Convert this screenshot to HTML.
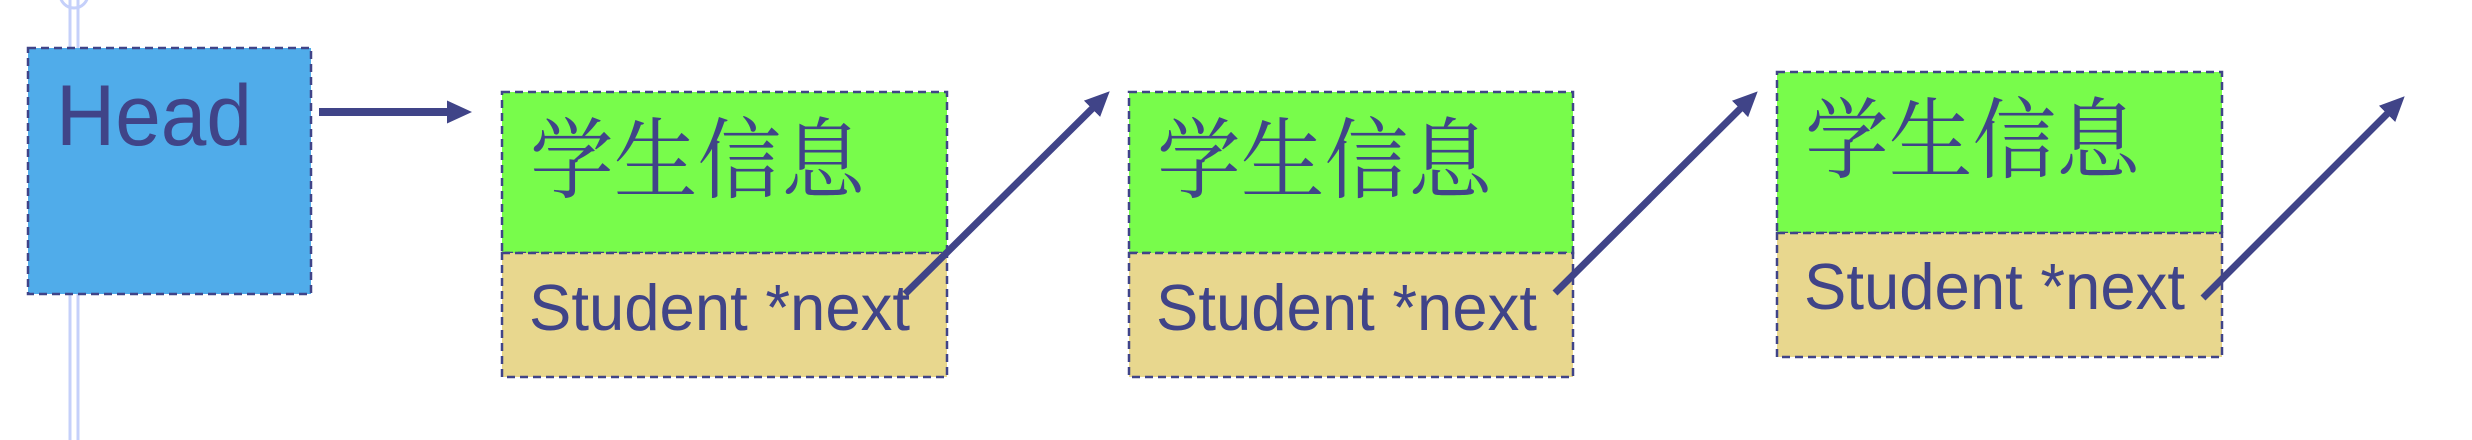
<!DOCTYPE html>
<html><head><meta charset="utf-8"><style>
html,body{margin:0;padding:0;background:#fff;width:2472px;height:440px;overflow:hidden}
</style></head><body>
<svg width="2472" height="440" viewBox="0 0 2472 440" xmlns="http://www.w3.org/2000/svg">
<defs>
<marker id="ah" markerWidth="26" markerHeight="24" refX="12" refY="11.5" orient="auto" markerUnits="userSpaceOnUse">
<path d="M0,0 L25,11.5 L0,23 Z" fill="#404488"/>
</marker>
</defs>
<g stroke="#c5d0fa" stroke-width="3" fill="none">
<line x1="70" y1="0" x2="70" y2="440"/>
<line x1="78" y1="0" x2="78" y2="440"/>
<circle cx="74" cy="-6" r="14"/>
</g>
<g stroke="#404488" stroke-width="2.5" stroke-dasharray="8,5">
<rect x="28" y="48" width="283" height="246" fill="#50acea"/>
<rect x="502" y="92" width="445" height="161" fill="#78fc4b"/>
<rect x="502" y="253" width="445" height="124" fill="#e8d78e"/>
<rect x="1129" y="92" width="444" height="161" fill="#78fc4b"/>
<rect x="1129" y="253" width="444" height="124" fill="#e8d78e"/>
<rect x="1777" y="72" width="445" height="161" fill="#78fc4b"/>
<rect x="1777" y="233" width="445" height="124" fill="#e8d78e"/>
</g>
<g fill="#404488" font-family="Liberation Sans, sans-serif">
<text x="56" y="145" font-size="86" textLength="196" lengthAdjust="spacingAndGlyphs">Head</text>
<text x="529" y="330" font-size="65" textLength="381" lengthAdjust="spacingAndGlyphs">Student *next</text>
<text x="1156" y="330" font-size="65" textLength="381" lengthAdjust="spacingAndGlyphs">Student *next</text>
<text x="1804" y="309" font-size="65" textLength="381" lengthAdjust="spacingAndGlyphs">Student *next</text>
</g>
<g fill="#404488" font-family="Liberation Serif, 'Noto Serif CJK SC', serif" font-size="88">
<text x="530" y="191" textLength="335" lengthAdjust="spacingAndGlyphs">学生信息</text>
<text x="1157" y="191" textLength="335" lengthAdjust="spacingAndGlyphs">学生信息</text>
<text x="1805" y="171" textLength="335" lengthAdjust="spacingAndGlyphs">学生信息</text>
</g>
<g stroke="#404488" stroke-width="7" fill="none" marker-end="url(#ah)">
<line x1="319" y1="112" x2="459" y2="112" stroke-width="8"/>
<line x1="905" y1="294" x2="1100.5" y2="100.4"/>
<line x1="1555" y1="293" x2="1748.5" y2="100.5"/>
<line x1="2203" y1="298" x2="2395.5" y2="105.5"/>
</g>
</svg>
</body></html>
